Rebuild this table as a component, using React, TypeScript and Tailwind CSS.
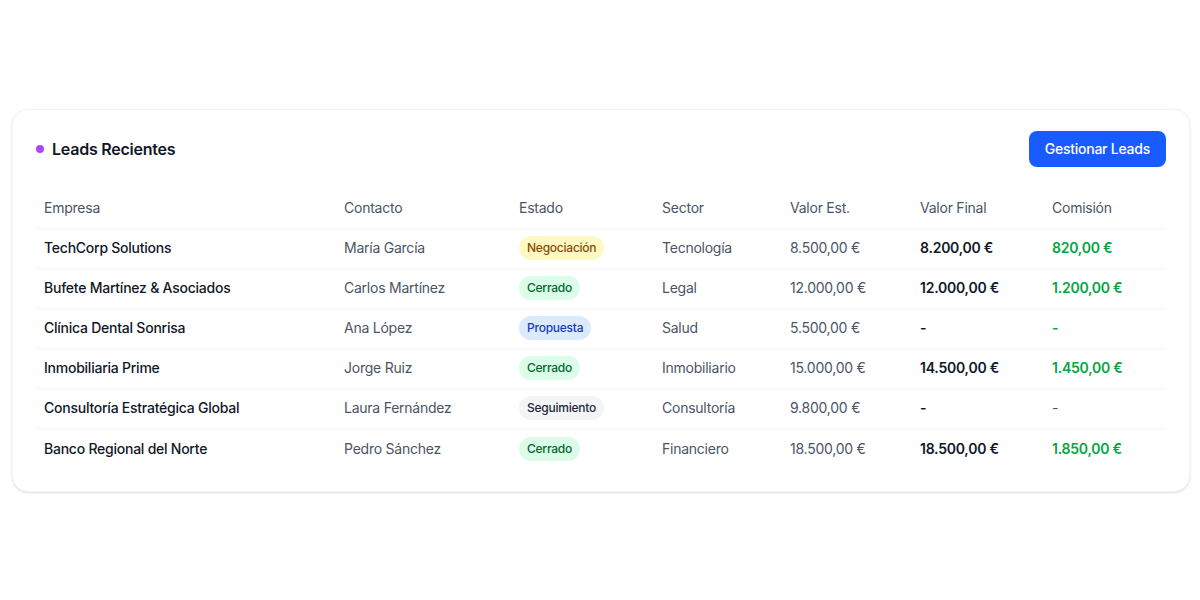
type Lead = {
  empresa: string
  contacto: string
  estado: "Negociación" | "Cerrado" | "Propuesta" | "Seguimiento"
  sector: string
  valorEst: string
  valorFinal: string
  comision: string
  comisionMuted?: boolean
}

const leads: Lead[] = [
  { empresa: "TechCorp Solutions", contacto: "María García", estado: "Negociación", sector: "Tecnología", valorEst: "8.500,00 €", valorFinal: "8.200,00 €", comision: "820,00 €" },
  { empresa: "Bufete Martínez & Asociados", contacto: "Carlos Martínez", estado: "Cerrado", sector: "Legal", valorEst: "12.000,00 €", valorFinal: "12.000,00 €", comision: "1.200,00 €" },
  { empresa: "Clínica Dental Sonrisa", contacto: "Ana López", estado: "Propuesta", sector: "Salud", valorEst: "5.500,00 €", valorFinal: "-", comision: "-" },
  { empresa: "Inmobiliaria Prime", contacto: "Jorge Ruiz", estado: "Cerrado", sector: "Inmobiliario", valorEst: "15.000,00 €", valorFinal: "14.500,00 €", comision: "1.450,00 €" },
  { empresa: "Consultoría Estratégica Global", contacto: "Laura Fernández", estado: "Seguimiento", sector: "Consultoría", valorEst: "9.800,00 €", valorFinal: "-", comision: "-", comisionMuted: true },
  { empresa: "Banco Regional del Norte", contacto: "Pedro Sánchez", estado: "Cerrado", sector: "Financiero", valorEst: "18.500,00 €", valorFinal: "18.500,00 €", comision: "1.850,00 €" },
]

const badgeStyles: Record<Lead["estado"], string> = {
  Negociación: "bg-yellow-100 text-yellow-800",
  Cerrado: "bg-green-100 text-green-800",
  Propuesta: "bg-blue-100 text-blue-800",
  Seguimiento: "bg-gray-100 text-gray-800",
}

const cols = "grid grid-cols-[300px_175px_143px_128px_130px_132px_1fr] items-center"

export default function App() {
  return (
    <div className="flex min-h-screen items-center bg-white pl-3 pr-[10px] font-['Inter',sans-serif] tracking-[-0.015em]">
      <section className="w-full rounded-2xl border border-gray-100 bg-white px-[23px] pb-[22px] pt-[21px] shadow-sm">
        <div className="mb-[22px] flex items-center justify-between">
          <h2 className="flex items-center gap-2 text-base font-semibold text-gray-900">
            <span className="h-2 w-2 rounded-full bg-purple-500" />
            Leads Recientes
          </h2>
          <button
            type="button"
            className="rounded-lg bg-[#185cff] px-4 py-2 text-sm font-medium text-white"
          >
            Gestionar Leads
          </button>
        </div>

        <div className="text-sm">
          <div className={`${cols} h-10 border-b border-gray-100 text-gray-600`}>
            <div className="px-2">Empresa</div>
            <div className="px-2">Contacto</div>
            <div className="px-2">Estado</div>
            <div className="px-2">Sector</div>
            <div className="px-2">Valor Est.</div>
            <div className="px-2">Valor Final</div>
            <div className="px-2">Comisión</div>
          </div>

          {leads.map((lead, i) => (
            <div
              key={lead.empresa}
              className={`${cols} h-10 ${i < leads.length - 1 ? "border-b border-gray-100" : ""}`}
            >
              <div className="px-2 font-medium text-gray-900">{lead.empresa}</div>
              <div className="px-2 text-gray-600">{lead.contacto}</div>
              <div className="px-2">
                <span className={`inline-block rounded-full px-2 py-1 text-xs font-medium leading-4 ${badgeStyles[lead.estado]}`}>
                  {lead.estado}
                </span>
              </div>
              <div className="px-2 text-gray-600">{lead.sector}</div>
              <div className="px-2 text-gray-600">{lead.valorEst}</div>
              <div className="px-2 font-semibold text-gray-900">{lead.valorFinal}</div>
              <div className={`px-2 ${lead.comisionMuted ? "font-normal text-gray-600" : "font-semibold text-green-600"}`}>
                {lead.comision}
              </div>
            </div>
          ))}
        </div>
      </section>
    </div>
  )
}
